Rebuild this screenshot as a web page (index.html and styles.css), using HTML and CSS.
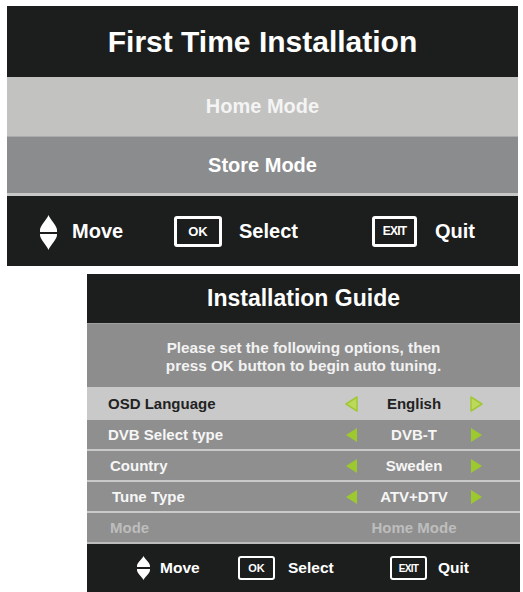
FILE: index.html
```html
<!DOCTYPE html>
<html>
<head>
<meta charset="utf-8">
<link rel="stylesheet" href="styles.css">
</head>
<body>
<div class="panel p1">
  <div class="title t1">First Time Installation</div>
  <div class="mode home">Home Mode</div>
  <div class="mode store">Store Mode</div>
  <div class="foot f1">
    <div class="grp">
      <svg class="mv" width="17" height="35" viewBox="0 0 17 35"><path d="M8.5 0 C10 4 17 11 17 15 L17 17 L0 17 L0 15 C0 11 7 4 8.5 0 Z" fill="#fff"/><path d="M8.5 35 C10 31 17 24 17 20 L17 19 L0 19 L0 20 C0 24 7 31 8.5 35 Z" fill="#fff"/></svg>
      <span>Move</span>
    </div>
    <div class="grp g2">
      <span class="key ok">OK</span>
      <span>Select</span>
    </div>
    <div class="grp g3">
      <span class="key exit">EXIT</span>
      <span>Quit</span>
    </div>
  </div>
</div>

<div class="panel p2">
  <div class="title t2">Installation Guide</div>
  <div class="desc">Please set the following options, then<br>press OK button to begin auto tuning.</div>
  <div class="row sel">
    <span class="lbl">OSD Language</span>
    <svg class="ar" width="13" height="16" viewBox="0 0 13 16"><polygon points="12,1 12,15 1,8" fill="#bcd95c" stroke="#a0c836" stroke-width="1.5" stroke-linejoin="round"/></svg>
    <span class="val">English</span>
    <svg class="ar" width="13" height="16" viewBox="0 0 13 16"><polygon points="1,1 1,15 12,8" fill="#bcd95c" stroke="#a0c836" stroke-width="1.5" stroke-linejoin="round"/></svg>
  </div>
  <div class="row">
    <span class="lbl">DVB Select type</span>
    <svg class="ar" width="13" height="16" viewBox="0 0 13 16"><polygon points="12,1 12,15 1,8" fill="#9cc92e"/></svg>
    <span class="val">DVB-T</span>
    <svg class="ar" width="13" height="16" viewBox="0 0 13 16"><polygon points="1,1 1,15 12,8" fill="#9cc92e"/></svg>
  </div>
  <div class="row">
    <span class="lbl l3">Country</span>
    <svg class="ar" width="13" height="16" viewBox="0 0 13 16"><polygon points="12,1 12,15 1,8" fill="#9cc92e"/></svg>
    <span class="val">Sweden</span>
    <svg class="ar" width="13" height="16" viewBox="0 0 13 16"><polygon points="1,1 1,15 12,8" fill="#9cc92e"/></svg>
  </div>
  <div class="row">
    <span class="lbl l4">Tune Type</span>
    <svg class="ar" width="13" height="16" viewBox="0 0 13 16"><polygon points="12,1 12,15 1,8" fill="#9cc92e"/></svg>
    <span class="val">ATV+DTV</span>
    <svg class="ar" width="13" height="16" viewBox="0 0 13 16"><polygon points="1,1 1,15 12,8" fill="#9cc92e"/></svg>
  </div>
  <div class="row dim">
    <span class="lbl l3">Mode</span>
    <span></span>
    <span class="val">Home Mode</span>
    <span></span>
  </div>
  <div class="foot f2">
    <div class="grp">
      <svg class="mv" width="13" height="24" viewBox="0 0 13 24"><path d="M6.5 0 C8 3 13 7 13 10 L13 11 L0 11 L0 10 C0 7 5 3 6.5 0 Z" fill="#fff"/><path d="M6.5 24 C8 21 13 17 13 14 L13 13 L0 13 L0 14 C0 17 5 21 6.5 24 Z" fill="#fff"/></svg>
      <span>Move</span>
    </div>
    <div class="grp g2">
      <span class="key ok">OK</span>
      <span>Select</span>
    </div>
    <div class="grp g3">
      <span class="key exit">EXIT</span>
      <span>Quit</span>
    </div>
  </div>
</div>
</body>
</html>
```
FILE: styles.css
```css
html, body {
  margin: 0;
  padding: 0;
  background: #fff;
}
body {
  font-family: "Liberation Sans", Arial, sans-serif;
  font-weight: bold;
  color: #fff;
  padding-top: 6px;
}
.panel {
  background: #1c1d1d;
}
.p1 {
  margin-left: 7px;
  width: 511px;
}
.p2 {
  margin-left: 87px;
  margin-top: 8px;
  width: 433px;
}
.title {
  display: flex;
  align-items: center;
  justify-content: center;
}
.t1 {
  height: 71px;
  font-size: 30px;
}
.t2 {
  height: 49px;
  font-size: 23px;
}
.mode {
  display: flex;
  align-items: center;
  justify-content: center;
  font-size: 20px;
}
.home {
  height: 59px;
  background: #c2c2c0;
  color: #f4f4f4;
}
.store {
  height: 57px;
  background: #8b8c8e;
  border-top: 1px solid #a9aaab;
  box-sizing: border-box;
}
.foot {
  display: flex;
  align-items: center;
  box-sizing: border-box;
}
.grp {
  display: flex;
  align-items: center;
}
.f1 {
  height: 73px;
  border-top: 3px solid #c8c8c8;
  padding-left: 33px;
  font-size: 20px;
}
.f1 .grp:first-child { width: 134px; gap: 15px; }
.f1 .g2 { width: 198px; gap: 17px; }
.f1 .g3 { gap: 18px; }
.f1 .mv { margin-top: 2px; }
.key {
  display: flex;
  align-items: center;
  justify-content: center;
  box-sizing: border-box;
  border: 3px solid #fff;
  border-radius: 3px;
  color: #fff;
}
.f1 .ok { width: 48px; height: 31px; font-size: 13px; }
.f1 .exit { width: 45px; height: 31px; font-size: 12px; letter-spacing: -0.8px; }
.desc {
  height: 64px;
  background: #8d8d8d;
  border-top: 1px solid #a0a0a0;
  box-sizing: border-box;
  display: flex;
  align-items: center;
  justify-content: center;
  text-align: center;
  font-size: 15.3px;
  line-height: 18px;
  color: #f2f2f2;
  padding-top: 2px;
}
.row {
  height: 31px;
  box-sizing: border-box;
  border-top: 2px solid #c9c9c9;
  background: #8f8f8f;
  display: grid;
  grid-template-columns: 237px 13px 112px 13px;
  align-items: center;
  padding-left: 21px;
  font-size: 15px;
  color: #f6f6f6;
}
.row.sel {
  background: #c9c9c9;
  color: #222;
  border-top-color: #c9c9c9;
}
.row.dim {
  color: #bdbdbd;
}
.lbl.l3 { padding-left: 2px; }
.lbl.l4 { padding-left: 4px; }
.val {
  text-align: center;
}
.ar { display: block; }
.f2 {
  height: 50px;
  border-top: 2px solid #bdbdbd;
  padding-left: 50px;
  font-size: 15.5px;
}
.f2 .grp:first-child { width: 101px; gap: 10px; }
.f2 .g2 { width: 152px; gap: 13px; }
.f2 .g3 { gap: 11px; }
.f2 .key { border-width: 2.5px; }
.f2 .ok { width: 37px; height: 24px; font-size: 11px; }
.f2 .exit { width: 37px; height: 24px; font-size: 10px; letter-spacing: -0.7px; }
```
